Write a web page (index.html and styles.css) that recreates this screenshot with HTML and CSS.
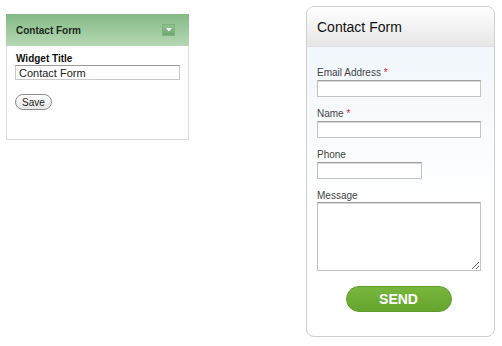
FILE: index.html
```html
<!DOCTYPE html>
<html>
<head>
<meta charset="utf-8">
<link rel="stylesheet" href="styles.css">
</head>
<body>
<div class="page">
  <div class="widget">
    <div class="widget-head">
      <span class="widget-name">Contact Form</span>
      <span class="toggle"><svg width="6" height="4" viewBox="0 0 6 4"><path d="M0 0H6L3 3.5Z" fill="#fff"/></svg></span>
    </div>
    <div class="widget-body">
      <label class="w-label">Widget Title</label>
      <input class="w-input" type="text" value="Contact Form">
      <button class="save">Save</button>
    </div>
  </div>
  <div class="panel">
    <div class="panel-head">Contact Form</div>
    <div class="panel-body">
      <div class="field">
        <label>Email Address <span class="req">*</span></label>
        <input type="text" class="inp">
      </div>
      <div class="field">
        <label>Name <span class="req">*</span></label>
        <input type="text" class="inp">
      </div>
      <div class="field">
        <label>Phone</label>
        <input type="text" class="inp short">
      </div>
      <div class="field">
        <label>Message</label>
        <textarea class="inp area"></textarea>
      </div>
      <div class="actions"><button class="send">SEND</button></div>
    </div>
  </div>
</div>
</body>
</html>
```
FILE: styles.css
```css
* { box-sizing: border-box; }
html, body { margin: 0; padding: 0; background: #fff; }
body { font-family: "Liberation Sans", Arial, sans-serif; width: 502px; height: 346px; overflow: hidden; }
.page { display: flex; align-items: flex-start; padding: 6px 0 0 6px; }

.widget { width: 183px; height: 126px; margin-top: 8px; border: 1px solid #dcdcdc; background: #fff; }
.widget-head { height: 32px; margin: -1px -1px 0; padding: 0 14px 0 10px; display: flex; align-items: center; justify-content: space-between;
  background: linear-gradient(#84ba86, #b6d8b4); }
.widget-name { font-size: 10px; font-weight: bold; color: #1c2a1c; }
.toggle { width: 13px; height: 12px; background: linear-gradient(#8fc38f, #6da86d); border: 1px solid #7fb07f; display: flex; align-items: center; justify-content: center; }
.widget-body { padding: 7px 8px 0 8px; display: flex; flex-direction: column; align-items: flex-start; }
.w-label { font-size: 10px; font-weight: bold; color: #111; line-height: 11px; margin-left: 1px; }
.w-input { width: 165px; height: 15px; margin-top: 1px; border: 1px solid #c9c9c9; border-top-color: #9a9a9a; padding: 0 3px; font-family: "Liberation Sans", Arial, sans-serif; font-size: 11px; color: #222; outline: none; }
.save { margin-top: 14px; width: 37px; height: 16px; border-radius: 8px; border: 1px solid #8e8e8e; background: linear-gradient(#fff, #e6e6e6); font-family: "Liberation Sans", Arial, sans-serif; font-size: 10px; color: #222; padding: 0; line-height: 13px; }

.panel { margin-left: 117px; width: 189px; height: 331px; border: 1px solid #cfcfcf; border-radius: 8px; overflow: hidden;
  background: linear-gradient(#eef5fb, #ffffff 60%); }
.panel-head { height: 40px; padding-left: 10px; display: flex; align-items: center; font-size: 14px; color: #111;
  background: linear-gradient(#ffffff, #e6e6e6); border-bottom: 1px solid #e0e0e0; }
.panel-body { padding: 20px 12px 0 10px; display: flex; flex-direction: column; }
.field { display: flex; flex-direction: column; align-items: flex-start; margin-bottom: 11px; }
.field label { font-size: 10px; line-height: 12px; color: #444; margin-bottom: 1px; }
.req { color: #d22; }
.inp { width: 164px; height: 17px; background: #fff; border: 1px solid #c4c4c4; border-top-color: #a0a0a0; box-shadow: inset 0 1px 0 #d8d8d8; outline: none; }
.short { width: 105px; height: 17px; }
.area { height: 69px; resize: both; margin-top: -1px; }
.actions { display: flex; justify-content: center; padding-top: 4px; padding-right: 2px; }
.send { width: 106px; height: 26px; border-radius: 13px; border: 1px solid #5f9c2c; background: linear-gradient(#78b63c, #66a52e); color: #fff; font-family: "Liberation Sans", Arial, sans-serif; font-weight: bold; font-size: 14px; padding: 0; }
```
